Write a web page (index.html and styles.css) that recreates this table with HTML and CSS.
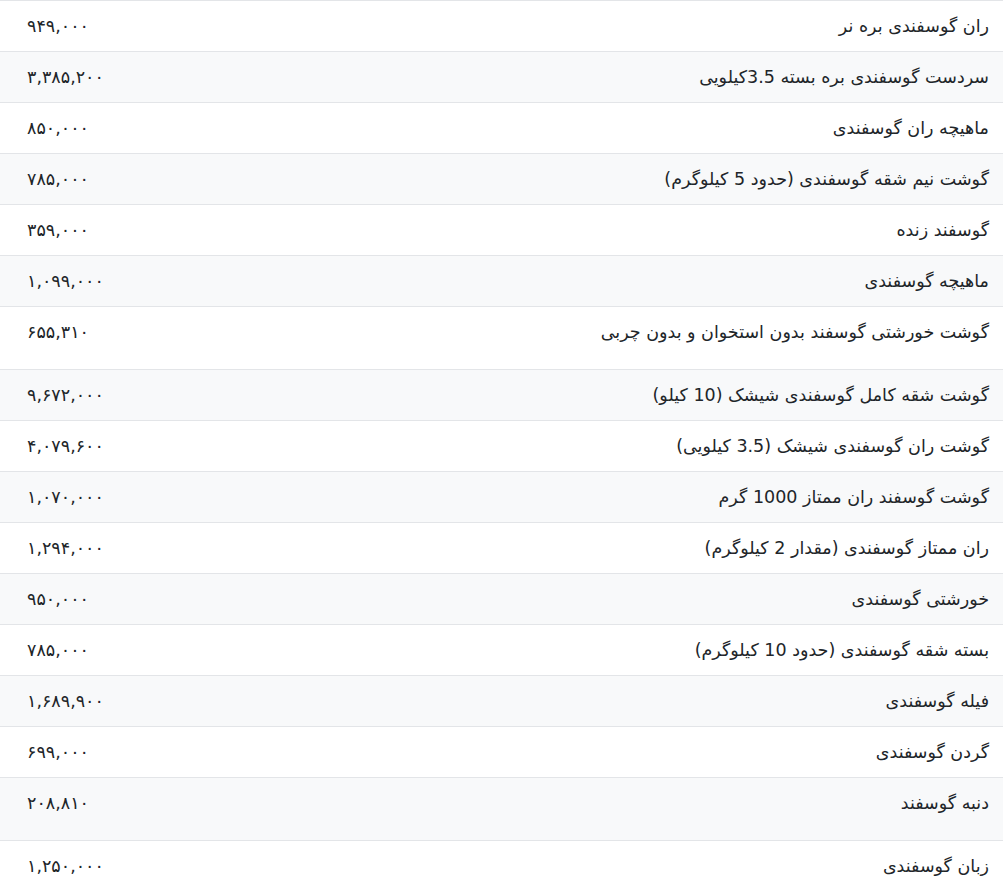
FILE: index.html
```html
<!DOCTYPE html>
<html lang="fa" dir="rtl">
<head>
<meta charset="utf-8">
<link rel="stylesheet" href="styles.css">
</head>
<body>
<table class="prices">
<tbody>
<tr><td class="name">ران گوسفندی بره نر</td><td class="price">۹۴۹,۰۰۰</td></tr>
<tr><td class="name">سردست گوسفندی بره بسته 3.5کیلویی</td><td class="price">۳,۳۸۵,۲۰۰</td></tr>
<tr><td class="name">ماهیچه ران گوسفندی</td><td class="price">۸۵۰,۰۰۰</td></tr>
<tr><td class="name">گوشت نیم شقه گوسفندی (حدود 5 کیلوگرم)</td><td class="price">۷۸۵,۰۰۰</td></tr>
<tr><td class="name">گوسفند زنده</td><td class="price">۳۵۹,۰۰۰</td></tr>
<tr><td class="name">ماهیچه گوسفندی</td><td class="price">۱,۰۹۹,۰۰۰</td></tr>
<tr class="tall"><td class="name">گوشت خورشتی گوسفند بدون استخوان و بدون چربی</td><td class="price">۶۵۵,۳۱۰</td></tr>
<tr><td class="name">گوشت شقه کامل گوسفندی شیشک (10 کیلو)</td><td class="price">۹,۶۷۲,۰۰۰</td></tr>
<tr><td class="name">گوشت ران گوسفندی شیشک (3.5 کیلویی)</td><td class="price">۴,۰۷۹,۶۰۰</td></tr>
<tr><td class="name">گوشت گوسفند ران ممتاز 1000 گرم</td><td class="price">۱,۰۷۰,۰۰۰</td></tr>
<tr><td class="name">ران ممتاز گوسفندی (مقدار 2 کیلوگرم)</td><td class="price">۱,۲۹۴,۰۰۰</td></tr>
<tr><td class="name">خورشتی گوسفندی</td><td class="price">۹۵۰,۰۰۰</td></tr>
<tr><td class="name">بسته شقه گوسفندی (حدود 10 کیلوگرم)</td><td class="price">۷۸۵,۰۰۰</td></tr>
<tr><td class="name">فیله گوسفندی</td><td class="price">۱,۶۸۹,۹۰۰</td></tr>
<tr><td class="name">گردن گوسفندی</td><td class="price">۶۹۹,۰۰۰</td></tr>
<tr class="tall"><td class="name">دنبه گوسفند</td><td class="price">۲۰۸,۸۱۰</td></tr>
<tr><td class="name">زبان گوسفندی</td><td class="price">۱,۲۵۰,۰۰۰</td></tr>
</tbody>
</table>
</body>
</html>
```
FILE: styles.css
```css
html, body {
  margin: 0;
  padding: 0;
  background: #ffffff;
}
body {
  font-family: "DejaVu Sans", "Noto Sans", sans-serif;
  font-size: 17.5px;
  color: #212529;
}
.prices {
  width: 1003px;
  border-collapse: collapse;
}
.prices td {
  border-top: 1px solid #e3e5e8;
  padding: 12px 14px 12px 14px;
  line-height: 26px;
  vertical-align: top;
}
.prices tr:nth-child(even) td {
  background: #f8f9fa;
}
.prices tr.tall td {
  padding-bottom: 24px;
}
.name {
  text-align: right;
}
.price {
  text-align: left;
  padding-left: 27px !important;
  white-space: nowrap;
  width: 180px;
}
```
